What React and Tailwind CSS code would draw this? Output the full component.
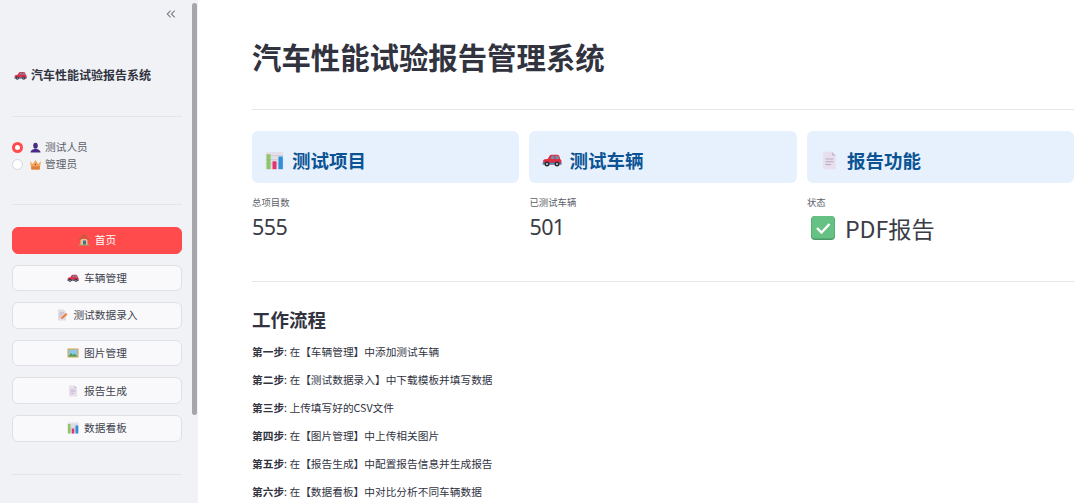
import React from 'react'

const FONT = "font-['Noto_Sans_CJK_SC','Noto_Sans',sans-serif]"

function CarIcon({ className }) {
  return (
    <svg viewBox="0 0 36 24" className={className}>
      <path d="M2 20v-6c0-2 1-3 3-3.500l5-.500 4-6c.8-1 1.500-1.500 3-1.500h10c2 0 3 .8 4 2.500l2 5.500c1.500 1 2 2 2 3.500v6z" fill="#dd2e44" />
      <path d="M15 10l3-5.500h4V10zM24 4.500h3.500c1 0 1.500.5 2 1.500l1.500 4h-7z" fill="#6e93ad" />
      <path d="M1 17h34v3H1z" fill="#3b88c3" />
      <circle cx="9" cy="19" r="4.500" fill="#292f33" />
      <circle cx="9" cy="19" r="1.800" fill="#ccd6dd" />
      <circle cx="27" cy="19" r="4.500" fill="#292f33" />
      <circle cx="27" cy="19" r="1.800" fill="#ccd6dd" />
    </svg>
  )
}

function ChartIcon({ className }) {
  return (
    <svg viewBox="0 0 24 24" className={className}>
      <rect x="1" y="1" width="22" height="22" fill="#e3e0ea" />
      <path d="M1 6h22M1 11h22M1 16h22" stroke="#c9c5d6" strokeWidth="1" />
      <rect x="2" y="4" width="5" height="19" fill="#8cc665" />
      <rect x="9.500" y="13" width="5" height="10" fill="#e5336f" />
      <rect x="17" y="7" width="5.500" height="16" fill="#2f8fd8" />
    </svg>
  )
}

function MemoIcon({ className }) {
  return (
    <svg viewBox="0 0 24 24" className={className}>
      <path d="M4 1h11l5 5v17H4z" fill="#e8dfee" />
      <path d="M15 1l5 5h-5z" fill="#cbbdd6" />
      <path d="M7 10h10M7 13.500h10M7 17h7" stroke="#b6a9c4" strokeWidth="1.300" />
    </svg>
  )
}

function PencilMemoIcon({ className }) {
  return (
    <svg viewBox="0 0 24 24" className={className}>
      <path d="M4 1h11l5 5v17H4z" fill="#e3dbe6" />
      <path d="M7 8h9M7 12h5M7 16h3" stroke="#a99cb4" strokeWidth="1.300" />
      <path d="M10 20l1-4L20 8l3 3-9 8z" fill="#ee7d3b" />
    </svg>
  )
}

function HouseIcon({ className }) {
  return (
    <svg viewBox="0 0 24 24" className={className}>
      <path d="M1 23c1-3 4-4 11-4s10 1 11 4z" fill="#8db36a" />
      <path d="M5 10h14v11H5z" fill="#e6c28f" />
      <path d="M12 0L1 12h4l7-7 7 7h4z" fill="#b5603a" />
      <rect x="10" y="13" width="6" height="8" fill="#3f6f95" />
    </svg>
  )
}

function PictureIcon({ className }) {
  return (
    <svg viewBox="0 0 24 24" className={className}>
      <rect x="1" y="3" width="22" height="18" fill="#d9a441" />
      <rect x="3" y="5" width="18" height="14" fill="#8fc7e8" />
      <path d="M3 19l5-7 4 4 3-3 6 6z" fill="#4f9e57" />
    </svg>
  )
}

function BustIcon({ className }) {
  return (
    <svg viewBox="0 0 24 24" className={className}>
      <ellipse cx="12" cy="8" rx="5" ry="6.500" fill="#4b2a86" />
      <path d="M1 23c0-5 4-7 8-8h6c4 1 8 3 8 8z" fill="#4b2a86" />
    </svg>
  )
}

function CrownIcon({ className }) {
  return (
    <svg viewBox="0 0 24 24" className={className}>
      <path d="M0 5l6 6 6-9 6 9 6-6-3 18H3z" fill="#f2a65a" />
      <path d="M3 16h18v7H3z" fill="#dd7f3a" />
      <circle cx="12" cy="12" r="1.800" fill="#dd2e44" />
    </svg>
  )
}

function CheckIcon({ className }) {
  return (
    <svg viewBox="0 0 24 24" className={className}>
      <rect x="0" y="0" width="24" height="24" rx="4" fill="#4c9a68" />
      <rect x="0.500" y="0" width="23" height="22.500" rx="3.500" fill="#66c184" />
      <path d="M6 12l4.500 4.500 8-8.500" fill="none" stroke="#fff" strokeWidth="2.400" />
    </svg>
  )
}

const navItems = [
  { label: '首页', icon: HouseIcon, active: true },
  { label: '车辆管理', icon: CarIcon },
  { label: '测试数据录入', icon: PencilMemoIcon },
  { label: '图片管理', icon: PictureIcon },
  { label: '报告生成', icon: MemoIcon },
  { label: '数据看板', icon: ChartIcon },
]

const cards = [
  { title: '测试项目', icon: ChartIcon, metric: '总项目数', value: '555', iconSize: 'w-[19px] h-[19px]' },
  { title: '测试车辆', icon: CarIcon, metric: '已测试车辆', value: '501', iconSize: 'w-[20px] h-[14px]', gap: 'gap-[7px]' },
  { title: '报告功能', icon: MemoIcon, metric: '状态', value: 'PDF报告', iconSize: 'w-[19px] h-[19px]', check: true },
]

const steps = [
  ['第一步', '在【车辆管理】中添加测试车辆'],
  ['第二步', '在【测试数据录入】中下载模板并填写数据'],
  ['第三步', '上传填写好的CSV文件'],
  ['第四步', '在【图片管理】中上传相关图片'],
  ['第五步', '在【报告生成】中配置报告信息并生成报告'],
  ['第六步', '在【数据看板】中对比分析不同车辆数据'],
]

function Sidebar() {
  return (
    <aside className="relative w-[198px] h-full shrink-0 bg-[#f0f2f6] px-3">
      {/* Collapse */}
      <div className="h-[28px] pt-[9px] flex justify-end pr-[10px]">
        <svg viewBox="0 0 12 12" className="w-[10px] h-[10px] text-[#7c7f88]" fill="none" stroke="currentColor" strokeWidth="1.300">
          <path d="M5.500 2L1.500 6l4 4M10.500 2L6.500 6l4 4" />
        </svg>
      </div>

      <div className="mt-[38px] ml-[2px] flex items-center gap-[4px] h-[18px]">
        <CarIcon className="w-[13px] h-[9px]" />
        <span className="text-[12px] leading-[18px] font-bold text-[#31333f]">汽车性能试验报告系统</span>
      </div>

      <div className="mt-[32px] h-px w-[170px] bg-[#e3e5ea]" />

      {/* Role */}
      <div className="mt-[23px] flex flex-col gap-[3px]">
        <div className="flex items-center h-[14px]">
          <div className="w-[11px] h-[11px] rounded-full bg-[#ff4b4b] flex items-center justify-center">
            <div className="w-[5px] h-[5px] rounded-full bg-white" />
          </div>
          <BustIcon className="ml-[7px] w-[11px] h-[11px]" />
          <span className="ml-[4px] text-[10.700px] leading-[14px] text-[#5d5f69]">测试人员</span>
        </div>
        <div className="flex items-center h-[14px]">
          <div className="w-[11px] h-[11px] rounded-full bg-white border border-[#d5d7dd]" />
          <CrownIcon className="ml-[7px] w-[11px] h-[11px]" />
          <span className="ml-[4px] text-[10.700px] leading-[14px] text-[#5d5f69]">管理员</span>
        </div>
      </div>

      <div className="mt-[33px] h-px w-[170px] bg-[#e3e5ea]" />

      {/* Nav */}
      <nav className="mt-[22px] flex flex-col gap-[11px] w-[170px]">
        {navItems.map(item => {
          const Icon = item.icon
          return (
            <div
              key={item.label}
              className={`h-[26.600px] rounded-[6px] flex items-center justify-center gap-[5px] text-[10.700px] border ${
                item.active
                  ? 'bg-[#ff4b4b] border-[#ff4b4b] text-white'
                  : 'bg-[#f9f9fb] border-[#dfe0e5] text-[#41434e]'
              }`}
            >
              {Icon === CarIcon ? <Icon className="w-[12px] h-[8px]" /> : <Icon className="w-[12px] h-[12px]" />}
              <span>{item.label}</span>
            </div>
          )
        })}
      </nav>

      <div className="mt-[32px] h-px w-[170px] bg-[#e3e5ea]" />

      {/* Scrollbar */}
      <div className="absolute top-[3px] right-[1px] w-[5px] h-[412px] rounded-full bg-[#a6a7ab]" />
    </aside>
  )
}

function StatCard({ card }) {
  const Icon = card.icon
  return (
    <div className="flex-1 min-w-0">
      <div className={`h-[52px] rounded-[6px] bg-[#e7f1fd] flex items-center pl-[13px] pt-[6px] ${card.gap || 'gap-[8px]'}`}>
        <Icon className={card.iconSize} />
        <span className="text-[18.500px] leading-[26px] font-bold text-[#0b5394]">{card.title}</span>
      </div>
      <div className="mt-[12px] text-[9.400px] leading-[14px] text-[#5d5f69]">{card.metric}</div>
      {card.check ? (
        <div className="mt-[2px] flex items-center h-[34px] pl-[4px] gap-[10px]">
          <CheckIcon className="w-[24px] h-[24px]" />
          <span className="text-[23.200px] leading-[34px] text-[#3a3c47]">{card.value}</span>
        </div>
      ) : (
        <div className="pt-[1px] h-[34px] text-[21.500px] tracking-[-0.6px] leading-[34px] text-[#3a3c47] font-['Noto_Sans',sans-serif]">{card.value}</div>
      )}
    </div>
  )
}

export default function App() {
  return (
    <div className={`w-[1080px] h-screen overflow-hidden flex bg-white ${FONT}`}>
      <Sidebar />
      <main className="flex-1 min-w-0 pl-[54px] pr-[6px]">
        <h1 className="mt-[35px] text-[29.400px] leading-[42px] font-bold text-[#31333f]">汽车性能试验报告管理系统</h1>
        <div className="mt-[32px] h-px bg-[#e6e6e9]" />

        <div className="mt-[21px] flex gap-[10.400px]">
          {cards.map(card => <StatCard key={card.title} card={card} />)}
        </div>

        <div className="mt-[36px] h-px bg-[#e6e6e9]" />

        <h2 className="mt-[24px] text-[18.500px] leading-[27px] font-bold text-[#31333f]">工作流程</h2>
        <div className="mt-[10px] flex flex-col gap-[10px]">
          {steps.map(([step, text]) => (
            <p key={step} className="text-[10.700px] leading-[18px] text-[#31333f]">
              <strong className="font-bold">{step}</strong>: {text}
            </p>
          ))}
        </div>
      </main>
    </div>
  )
}
